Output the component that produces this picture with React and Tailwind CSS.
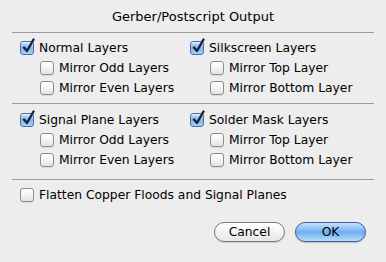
const font = { fontFamily: '"DejaVu Sans", "Liberation Sans", sans-serif' };

const Check = ({ checked }) => (
  <span className="relative flex h-[14px] w-[14px] shrink-0">
    {checked ? (
      <span className="h-[14px] w-[14px] rounded-[3px] border border-[#4a6f9f] bg-gradient-to-b from-[#cfe3fa] via-[#7fb3ec] to-[#a9d0f7] shadow-[inset_0_1px_1px_rgba(255,255,255,0.7)]" />
    ) : (
      <span className="h-[14px] w-[14px] rounded-[3px] border border-[#8e8e8e] bg-gradient-to-b from-[#ffffff] via-[#f4f4f4] to-[#e2e2e2] shadow-[0_1px_0_rgba(0,0,0,0.08)]" />
    )}
    {checked && (
      <svg className="absolute left-[2px] top-[-3px]" width="14" height="16" viewBox="0 0 14 16">
        <path d="M2 9.5 L5 13 L11.5 1.5" fill="none" stroke="#14213a" strokeWidth="2.3" strokeLinecap="round" strokeLinejoin="round" />
      </svg>
    )}
  </span>
);

const Row = ({ label, checked, sub }) => (
  <div className={`flex h-[20px] items-center gap-[5px] ${sub ? "pl-[20px]" : ""}`}>
    <Check checked={checked} />
    <span className="text-[12.3px] leading-none text-black">{label}</span>
  </div>
);

const Line = ({ className }) => (
  <div className={`mx-[12px] h-px bg-[#9a9a9a] ${className}`} />
);

export default function App() {
  return (
    <div className="flex h-[262px] w-[386px] flex-col bg-[#ededed] antialiased" style={font}>
      <div className="pt-[8px] text-center text-[13px] leading-[18px] text-black">
        Gerber/Postscript Output
      </div>
      <Line className="mt-[6px]" />

      {/* Layers top */}
      <div className="grid grid-cols-[170px_1fr] pl-[20px] pt-[5px]">
        <div>
          <Row label="Normal Layers" checked />
          <Row label="Mirror Odd Layers" sub />
          <Row label="Mirror Even Layers" sub />
        </div>
        <div>
          <Row label="Silkscreen Layers" checked />
          <Row label="Mirror Top Layer" sub />
          <Row label="Mirror Bottom Layer" sub />
        </div>
      </div>
      <Line className="mt-[5px]" />

      <div className="grid grid-cols-[170px_1fr] pl-[20px] pt-[6px]">
        <div>
          <Row label="Signal Plane Layers" checked />
          <Row label="Mirror Odd Layers" sub />
          <Row label="Mirror Even Layers" sub />
        </div>
        <div>
          <Row label="Solder Mask Layers" checked />
          <Row label="Mirror Top Layer" sub />
          <Row label="Mirror Bottom Layer" sub />
        </div>
      </div>
      <Line className="mt-[9px]" />

      <div className="pl-[20px] pt-[5px]">
        <Row label="Flatten Copper Floods and Signal Planes" />
      </div>

      <div className="mt-[17px] flex justify-end gap-[10px] pr-[20px]">
        <button className="flex h-[20px] w-[71px] items-center justify-center rounded-full border border-[#7a7a7a] bg-gradient-to-b from-[#ffffff] via-[#f3f3f3] to-[#e6e6e6] text-[12.3px] leading-none text-black shadow-[0_1px_1px_rgba(0,0,0,0.15)]">
          Cancel
        </button>
        <button className="flex h-[20px] w-[71px] items-center justify-center rounded-full border border-[#3f5f95] bg-gradient-to-b from-[#c8e1fb] via-[#6eaeef] to-[#b5dcfb] text-[12.3px] leading-none text-black shadow-[0_1px_1px_rgba(0,0,0,0.2)]">
          OK
        </button>
      </div>
    </div>
  );
}
